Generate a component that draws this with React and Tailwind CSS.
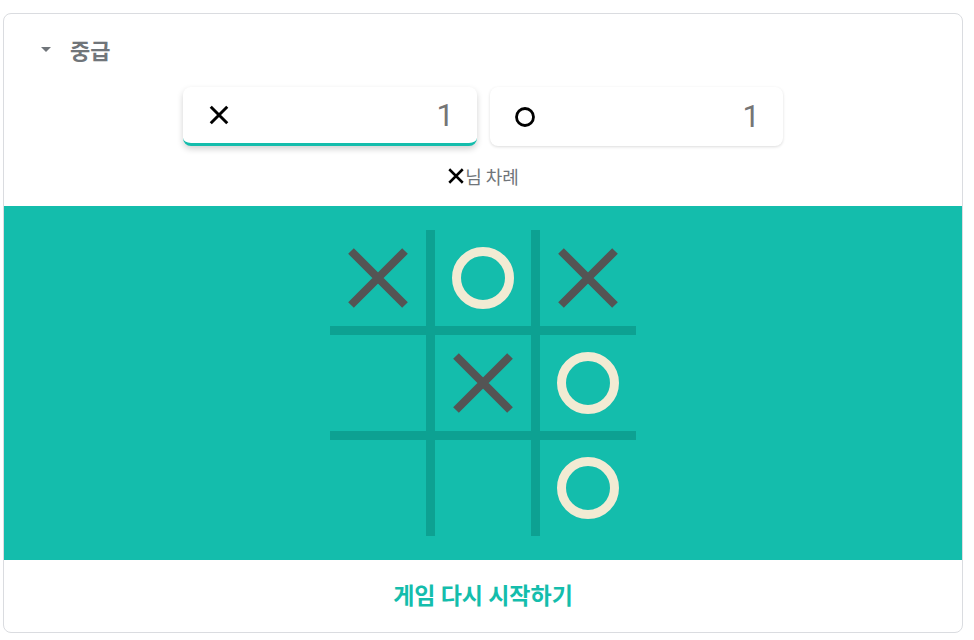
import React from "react";

const board = ["x", "o", "x", "", "x", "o", "", "", "o"];

const BigX = () => (
  <svg width="96" height="96" viewBox="0 0 96 96">
    <path d="M21 21 L75 75 M75 21 L21 75" stroke="#545454" strokeWidth="8" />
  </svg>
);

const BigO = () => (
  <svg width="96" height="96" viewBox="0 0 96 96">
    <circle cx="48" cy="48" r="26.5" fill="none" stroke="#f2ebd3" strokeWidth="9" />
  </svg>
);

const SmallX = ({ size = 20, w = 2.6 }) => (
  <svg width={size} height={size} viewBox="0 0 20 20">
    <path d="M2.5 2.5 L17.5 17.5 M17.5 2.5 L2.5 17.5" stroke="#000" strokeWidth={w} />
  </svg>
);

const SmallO = () => (
  <svg width="22" height="22" viewBox="0 0 22 22">
    <circle cx="11" cy="11" r="8.5" fill="none" stroke="#000" strokeWidth="2.8" />
  </svg>
);

export default function App() {
  return (
    <div className="pt-[13px] pl-[3px] bg-white min-h-[640px]" style={{ fontFamily: "Roboto, 'Noto Sans CJK KR', sans-serif" }}>
      <div className="w-[960px] h-[620px] border border-[#dadce0] rounded-[8px] overflow-hidden flex flex-col bg-white">
        {/* HEADER */}
        <div className="h-[70px] flex items-center pl-[36px] shrink-0">
          <svg width="12" height="6" viewBox="0 0 12 6" className="mt-[1px]">
            <path d="M1 0 L11 0 L6 5 Z" fill="#70757a" />
          </svg>
          <span className="ml-[18px] text-[22px] font-bold text-[#70757a]" style={{ fontFamily: "'Noto Sans CJK KR', sans-serif" }}>
            중급
          </span>
        </div>

        {/* SCORES */}
        <div className="flex justify-center gap-[13px] mt-[3px] shrink-0">
          <div className="w-[294px] h-[59px] rounded-[8px] bg-white shadow-[0_3px_6px_rgba(0,0,0,0.18)] border-b-[3px] border-[#14bdac] flex items-center justify-between pl-[25px] pr-[23px]">
            <SmallX size={22} w={2.7} />
            <span className="text-[31px] text-[#757575] leading-none">1</span>
          </div>
          <div className="w-[293px] h-[59px] rounded-[8px] bg-white shadow-[0_1px_3px_rgba(0,0,0,0.14)] flex items-center justify-between pl-[24px] pr-[23px]">
            <SmallO />
            <span className="text-[31px] text-[#757575] leading-none">1</span>
          </div>
        </div>

        {/* TURN */}
        <div className="h-[60px] flex items-center justify-center shrink-0">
          <SmallX size={18} w={2.8} />
          <span className="text-[18px] text-[#70757a]" style={{ fontFamily: "'Noto Sans CJK KR', sans-serif" }}>
            님 차례
          </span>
        </div>

        {/* BOARD */}
        <div className="h-[354px] bg-[#14bdac] flex items-center justify-center shrink-0">
          <div className="grid grid-cols-[96px_96px_96px] grid-rows-[96px_96px_96px] gap-[9px] bg-[#0da192]">
            {board.map((c, i) => (
              <div key={i} className="bg-[#14bdac] w-[96px] h-[96px]">
                {c === "x" && <BigX />}
                {c === "o" && <BigO />}
              </div>
            ))}
          </div>
        </div>

        {/* RESTART */}
        <div className="flex-1 flex items-center justify-center">
          <button className="text-[23px] font-bold text-[#14bdac] -mt-[4px]" style={{ fontFamily: "'Noto Sans CJK KR', sans-serif" }}>
            게임 다시 시작하기
          </button>
        </div>
      </div>
    </div>
  );
}
